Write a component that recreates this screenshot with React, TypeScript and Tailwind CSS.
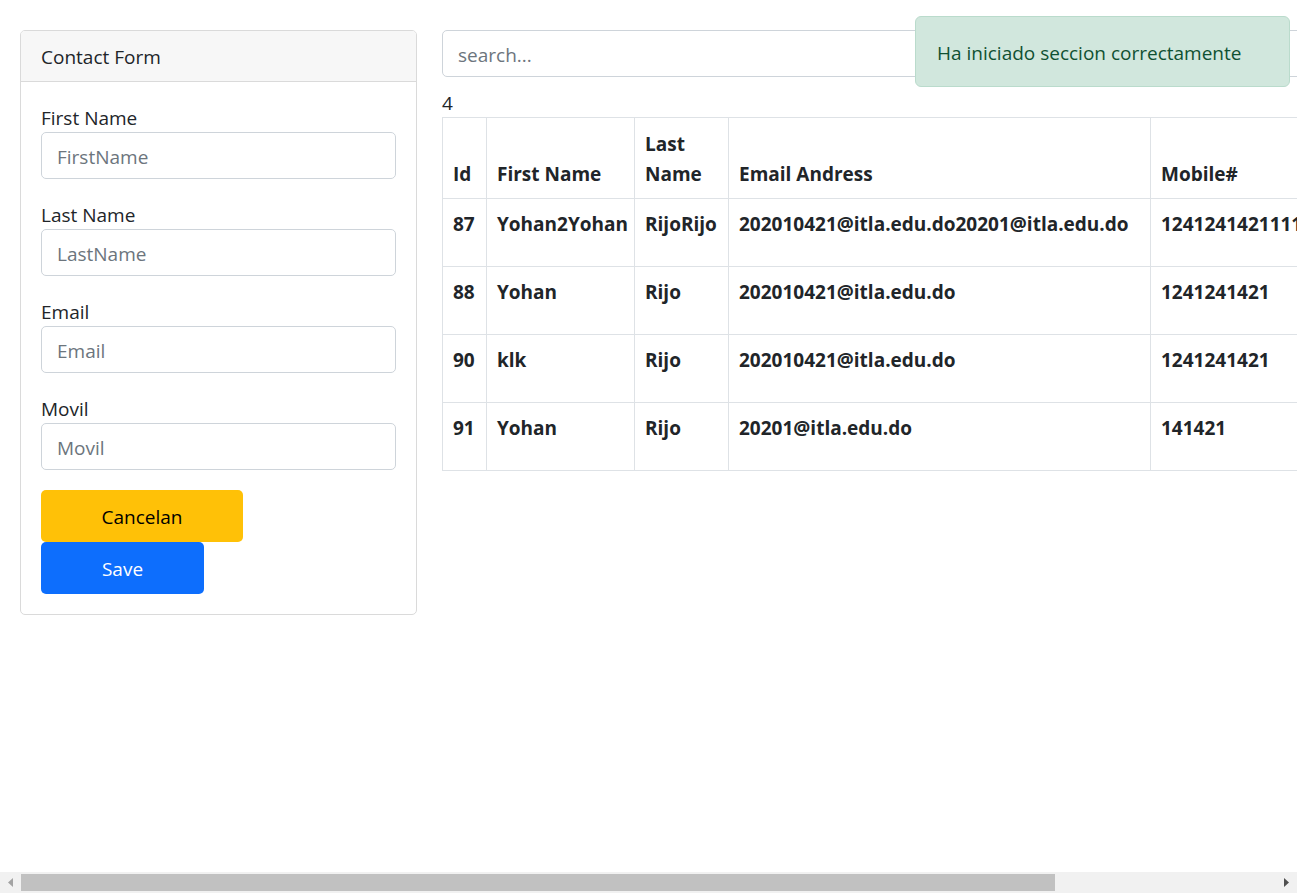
import React from "react";

const rows = [
  { id: "87", first: "Yohan2Yohan", last: "RijoRijo", email: "202010421@itla.edu.do20201@itla.edu.do", mobile: "1241241421111" },
  { id: "88", first: "Yohan", last: "Rijo", email: "202010421@itla.edu.do", mobile: "1241241421" },
  { id: "90", first: "klk", last: "Rijo", email: "202010421@itla.edu.do", mobile: "1241241421" },
  { id: "91", first: "Yohan", last: "Rijo", email: "20201@itla.edu.do", mobile: "141421" },
];

function Field({ label, placeholder }: { label: string; placeholder: string }) {
  return (
    <div className="mb-[20px] flex flex-col">
      <label className="h-[30px] pt-[1px] leading-[30px] text-[#212529]">{label}</label>
      <input
        placeholder={placeholder}
        className="h-[47px] w-full rounded-[5px] border border-[#ced4da] bg-white px-[15px] pt-[2px] text-[#212529] placeholder:text-[#6c757d] outline-none"
      />
    </div>
  );
}

const th = "border border-[#dee2e6] px-[10px] pb-[9px] text-left align-bottom leading-[30px]";
const td = "whitespace-nowrap overflow-hidden border border-[#dee2e6] px-[10px] pt-[10px] align-top leading-[30px]";

export default function App() {
  return (
    <div
      className="flex h-screen w-full flex-col overflow-hidden bg-white text-[19px] text-[#212529]"
      style={{ fontFamily: '"Open Sans", "Noto Sans", sans-serif' }}
    >
      <div className="relative min-h-0 flex-1">
        <div className="flex w-[1574px] items-start gap-[25px] px-[20px] pt-[30px]">
          {/* Card */}
          <div className="w-[397px] shrink-0 overflow-hidden rounded-[5px] border border-[#dadada] bg-white">
            <div className="flex h-[51px] items-center border-b border-[#dadada] bg-[#f7f7f7] px-[20px] pt-[2px] leading-[30px]">
              Contact Form
            </div>
            <div className="px-[20px] pb-[20px] pt-[20px]">
              <Field label="First Name" placeholder="FirstName" />
              <Field label="Last Name" placeholder="LastName" />
              <Field label="Email" placeholder="Email" />
              <Field label="Movil" placeholder="Movil" />
              <div className="flex flex-col items-start">
                <button className="h-[52px] w-[202px] rounded-[5px] bg-[#ffc107] pt-[2px] text-[#000]">Cancelan</button>
                <button className="h-[52px] w-[163px] rounded-[5px] bg-[#0d6efd] pt-[2px] text-white">Save</button>
              </div>
            </div>
          </div>

          {/* Right column */}
          <div className="flex w-[1112px] shrink-0 flex-col">
            <input
              placeholder="search..."
              className="h-[47px] w-full rounded-[5px] border border-[#ced4da] bg-white px-[15px] pt-[2px] text-[#212529] placeholder:text-[#6c757d] outline-none"
            />
            <div className="mt-[11px] h-[29px] leading-[30px]">4</div>
            <table className="w-[1100px] table-fixed border-collapse border border-[#dee2e6] font-bold">
              <colgroup>
                <col className="w-[44px]" />
                <col className="w-[148px]" />
                <col className="w-[94px]" />
                <col className="w-[422px]" />
                <col className="w-[392px]" />
              </colgroup>
              <thead>
                <tr className="h-[81px]">
                  <th className={th}>Id</th>
                  <th className={th}>First Name</th>
                  <th className={th}>Last Name</th>
                  <th className={th}>Email Andress</th>
                  <th className={th}>Mobile#</th>
                </tr>
              </thead>
              <tbody>
                {rows.map((r) => (
                  <tr key={r.id} className="h-[68px]">
                    <td className={td}>{r.id}</td>
                    <td className={td}>{r.first}</td>
                    <td className={td}>{r.last}</td>
                    <td className={td}>{r.email}</td>
                    <td className={td}>{r.mobile}</td>
                  </tr>
                ))}
              </tbody>
            </table>
          </div>
        </div>

        {/* Toast */}
        <div className="absolute left-[915px] top-[16px] flex h-[71px] w-[375px] items-center rounded-[6px] border border-[#badbcc] bg-[#d1e7dd] px-[21px] pt-[2px] leading-[30px] text-[#0f5132]">
          Ha iniciado seccion correctamente
        </div>
      </div>

      {/* Horizontal scrollbar */}
      <div className="flex h-[21px] w-full shrink-0 items-center bg-[#f1f1f1]">
        <div className="flex h-full w-[21px] items-center justify-center">
          <svg width="6" height="9" viewBox="0 0 6 9">
            <path d="M5 0 L0 4.5 L5 9 Z" fill="#a3a3a3" />
          </svg>
        </div>
        <div className="flex h-full flex-1 items-center">
          <div className="h-[17px] w-[1034px] bg-[#c1c1c1]" />
        </div>
        <div className="flex h-full w-[21px] items-center justify-center">
          <svg width="6" height="9" viewBox="0 0 6 9">
            <path d="M0 0 L5 4.5 L0 9 Z" fill="#505050" />
          </svg>
        </div>
      </div>
    </div>
  );
}
